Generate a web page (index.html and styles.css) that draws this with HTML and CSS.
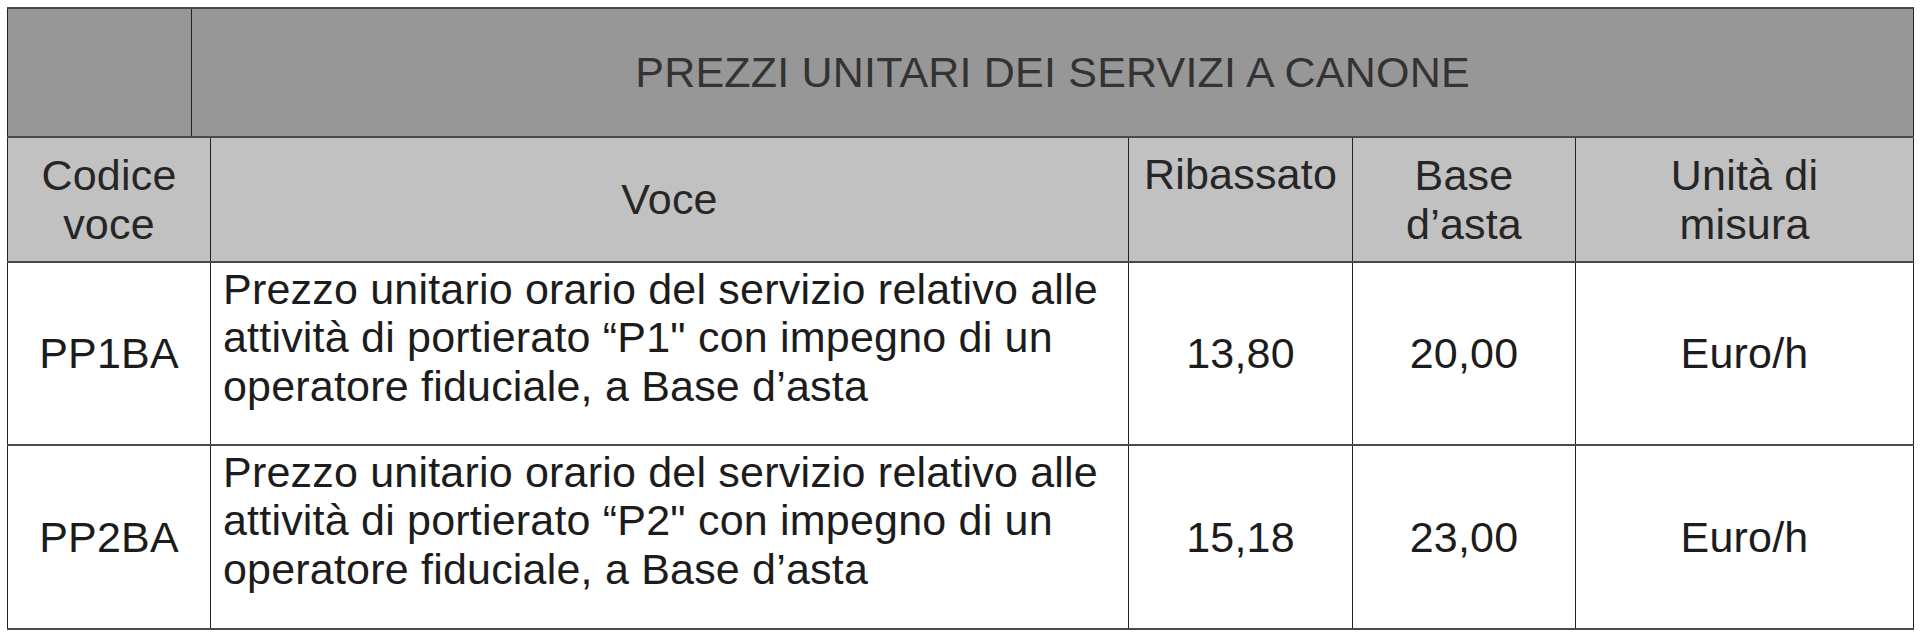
FILE: index.html
```html
<!DOCTYPE html>
<html lang="it">
<head>
<meta charset="utf-8">
<title>Prezzi unitari dei servizi a canone</title>
<link rel="stylesheet" href="styles.css">
</head>
<body>
<table class="prices">
  <colgroup>
    <col class="c-a">
    <col class="c-b">
    <col class="c-voce">
    <col class="c-rib">
    <col class="c-base">
    <col class="c-unit">
  </colgroup>
  <tr class="row-title">
    <td class="blank"></td>
    <td class="title" colspan="5">PREZZI UNITARI DEI SERVIZI A CANONE</td>
  </tr>
  <tr class="row-head">
    <td class="center" colspan="2">Codice<br>voce</td>
    <td class="center">Voce</td>
    <td class="center top"><div class="top-pad">Ribassato</div></td>
    <td class="center">Base<br>d’asta</td>
    <td class="center">Unità di<br>misura</td>
  </tr>
  <tr class="row-data">
    <td class="center" colspan="2">PP1BA</td>
    <td class="desc"><div class="desc-text">Prezzo unitario orario del servizio relativo alle attività di portierato “P1" con impegno di un operatore fiduciale, a Base d’asta</div></td>
    <td class="center">13,80</td>
    <td class="center">20,00</td>
    <td class="center">Euro/h</td>
  </tr>
  <tr class="row-data last">
    <td class="center" colspan="2">PP2BA</td>
    <td class="desc"><div class="desc-text">Prezzo unitario orario del servizio relativo alle attività di portierato “P2" con impegno di un operatore fiduciale, a Base d’asta</div></td>
    <td class="center">15,18</td>
    <td class="center">23,00</td>
    <td class="center">Euro/h</td>
  </tr>
</table>
</body>
</html>
```

FILE: styles.css
```css
html, body {
  margin: 0;
  padding: 0;
  background: #ffffff;
}

body {
  font-family: "Liberation Sans", Arial, sans-serif;
  font-size: 43px;
  color: #1c1c1c;
}

.prices {
  margin: 7px 0 0 7px;
  width: 1906px;
  table-layout: fixed;
  border-collapse: collapse;
  font-size: 43px;
  line-height: 48.4px;
  letter-spacing: 0.2px;
}

.c-a { width: 184px; }
.c-b { width: 19px; }
.c-voce { width: 918px; }
.c-rib { width: 224px; }
.c-base { width: 223px; }
.c-unit { width: 338px; }

.prices td {
  border-left: 1px solid #222222;
  border-right: 1px solid #222222;
  border-top: 2px solid #4a4a4a;
  border-bottom: 2px solid #4a4a4a;
  padding: 0;
  vertical-align: middle;
}

.row-title { height: 129px; }
.row-head { height: 125px; }
.row-data { height: 183px; }
.row-data.last { height: 184px; }

.row-title td {
  background: #979797;
}

.title {
  text-align: center;
  color: #333333;
}

.row-head td {
  background: #c1c1c1;
  color: #262626;
}

.row-data td {
  background: #ffffff;
}

.center {
  text-align: center;
}

.prices td.top {
  vertical-align: top;
}

.top-pad {
  padding-top: 12px;
}

.prices td.desc {
  vertical-align: top;
  text-align: left;
}

.desc-text {
  padding: 2px 10px 0 12px;
}
```
